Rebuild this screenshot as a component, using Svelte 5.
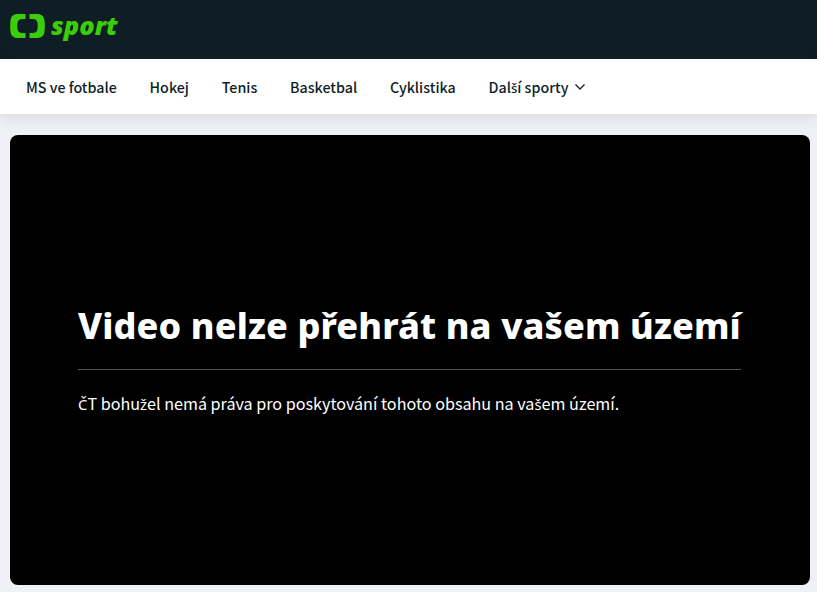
<script>
    const links = ['MS ve fotbale', 'Hokej', 'Tenis', 'Basketbal', 'Cyklistika'];
    const note = 'ČT bohužel nemá práva pro poskytování tohoto obsahu na vašem území.';

    function runs(text) {
        return text.split(/([Čšž])/).filter(Boolean);
    }
    const isCaron = (part) => /^[Čšž]$/.test(part);
</script>

<header class="top">
    <a class="logo" href="/">
        <svg width="35" height="24" viewBox="0 0 35 24" aria-hidden="true">
            <path fill="#3ccd0a" d="M15.500 0H9C3.500 0 1.200 1.800.6 6c-.6 4-.6 8 0 12 .6 4.200 2.900 6 8.400 6h6.500v-5h-3c-2.600 0-4.300-.9-4.800-3-.6-2.600-.6-5.400 0-8 .5-2.100 2.200-3 4.800-3h3z"/>
            <path fill="#3ccd0a" d="M19.500 0H26c5.500 0 7.800 1.800 8.400 6 .6 4 .6 8 0 12-.6 4.200-2.900 6-8.400 6h-6.500v-5h3c2.600 0 4.300-.9 4.800-3 .6-2.600.6-5.400 0-8-.5-2.100-2.200-3-4.800-3h-3z"/>
        </svg>
        <span>sport</span>
    </a>
</header>

<nav class="menu">
    {#each links as link}
        <a href="/">{link}</a>
    {/each}
    <a href="/" class="more">
        <span>{#each runs('Další sporty') as part}{#if isCaron(part)}<span class="caron">{part}</span>{:else}{part}{/if}{/each}</span>
        <svg width="12" height="8" viewBox="0 0 12 8" aria-hidden="true">
            <path d="M1.500 1.500 6 6l4.500-4.500" fill="none" stroke="#1b2329" stroke-width="1.400"/>
        </svg>
    </a>
</nav>

<main class="page">
    <section class="player">
        <div class="message">
            <h1>Video nelze přehrát na vašem území</h1>
            <p>{#each runs(note) as part}{#if isCaron(part)}<span class="caron">{part}</span>{:else}{part}{/if}{/each}</p>
        </div>
    </section>
</main>

<style>
    :global(body) {
        background: #f0f1f6;
        font-family: "Noto Sans CJK SC", "Noto Sans", sans-serif;
    }
    .top {
        height: 59px;
        background: #0f1e25;
        box-sizing: border-box;
        padding: 14px 0 0 10px;
    }
    .logo {
        display: flex;
        align-items: flex-start;
        gap: 6px;
        text-decoration: none;
    }
    .logo span {
        color: #3ccd0a;
        font-family: "Open Sans", sans-serif;
        font-size: 25.500px;
        font-weight: 800;
        font-style: italic;
        line-height: 22px;
    }
    .menu {
        height: 55px;
        background: #fff;
        box-sizing: border-box;
        padding: 0 26px;
        display: flex;
        align-items: center;
        gap: 32.800px;
        box-shadow: 0 2px 16px rgba(40, 45, 60, 0.14);
        position: relative;
    }
    .menu a {
        color: #0f1e25;
        text-decoration: none;
        font-size: 14.250px;
        font-weight: 500;
    }
    .more {
        display: flex;
        align-items: center;
        gap: 6px;
    }
    .caron {
        font-family: "Noto Sans", sans-serif;
        font-size: 0.92em;
    }
    .page {
        padding: 21px 7px 7px 10px;
    }
    .player {
        height: 450px;
        box-sizing: border-box;
        padding-bottom: 4px;
        background: #000;
        border-radius: 8px;
        display: flex;
        align-items: center;
    }
    .message {
        width: 663px;
        margin-left: 68px;
        color: #fff;
    }
    h1 {
        margin: 0;
        padding-bottom: 19px;
        border-bottom: 1px solid #555;
        font-family: "Noto Sans", sans-serif;
        font-size: 36px;
        letter-spacing: 0.12px;
        line-height: 48px;
        padding-top: 2px;
        font-weight: 800;
        white-space: nowrap;
    }
    p {
        margin: 21px 0 0;
        font-size: 16.150px;
        line-height: 24px;
    }
</style>
